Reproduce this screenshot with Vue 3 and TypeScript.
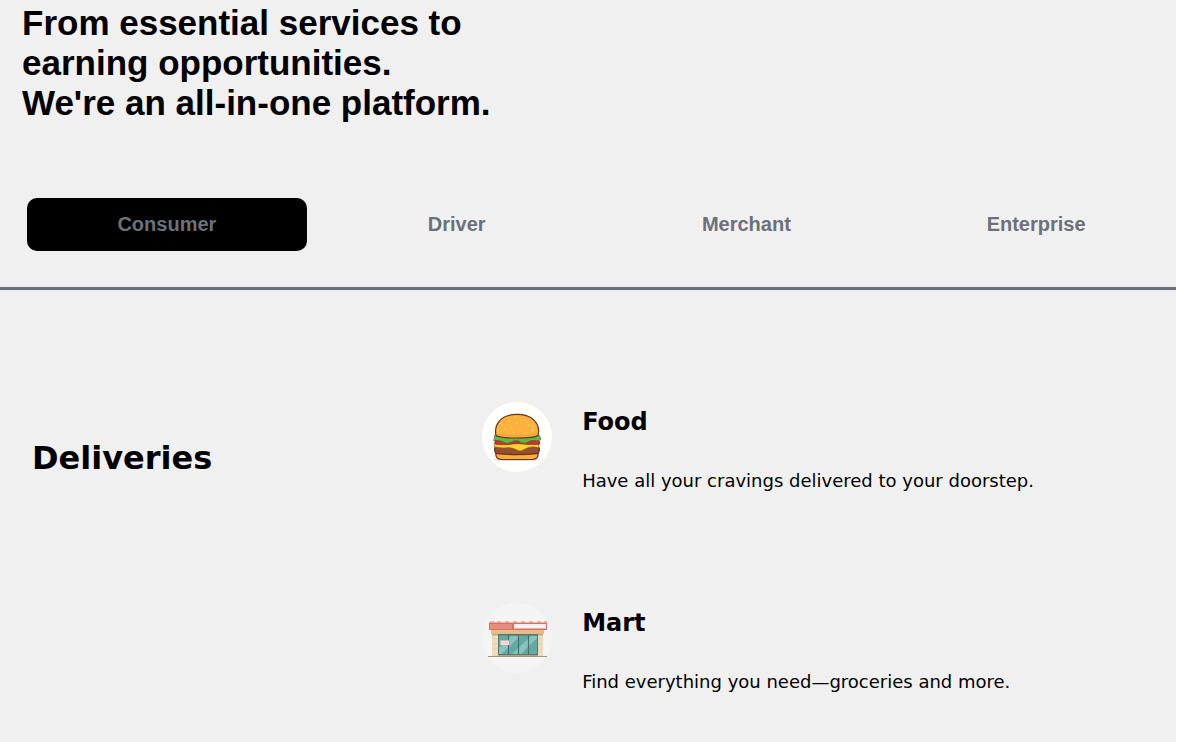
<script setup lang="ts">
import { ref } from 'vue'

interface Service {
  id: 'food' | 'mart'
  name: string
  text: string
}

const tabs: string[] = ['Consumer', 'Driver', 'Merchant', 'Enterprise']
const active = ref<string>('Consumer')

const services: Service[] = [
  { id: 'food', name: 'Food', text: 'Have all your cravings delivered to your doorstep.' },
  { id: 'mart', name: 'Mart', text: 'Find everything you need—groceries and more.' },
]
</script>

<template>
  <main class="page">
    <h1 class="title">
      From essential services to<br />earning opportunities.<br />We're an all-in-one platform.
    </h1>

    <nav class="tabs" aria-label="Audience">
      <button
        v-for="tab in tabs"
        :key="tab"
        type="button"
        class="tab"
        :class="{ active: tab === active }"
        @click="active = tab"
      >
        {{ tab }}
      </button>
    </nav>

    <section class="group">
      <h2 class="group-title">Deliveries</h2>
      <ul class="services">
        <li v-for="service in services" :key="service.id" class="service">
          <svg v-if="service.id === 'food'" class="picture" viewBox="0 0 70 70" aria-hidden="true">
            <circle cx="35" cy="35" r="35" fill="#fffffb" />
            <ellipse cx="35" cy="57.500" rx="23" ry="1.600" fill="#dcdcd8" />
            <path d="M14 51H56C57 55.500 53.500 57.500 50 57.500H20C16.500 57.500 13 55.500 14 51Z" fill="#f9ae38" stroke="#6b3328" stroke-width="1.200" />
            <path d="M15 44H55C58.500 45 58 50.500 55 51.700Q35 53.500 15 51.700C12 50.500 11.500 45 15 44Z" fill="#94502e" stroke="#6b2d26" stroke-width="1.200" />
            <path d="M12.500 41.500H57.500L56.500 45.500L51 44.800Q46 45 42 47.500Q38 50.500 34 47.500Q28 44.500 22 46L12.500 45Z" fill="#ffd52c" stroke="#93571f" stroke-width=".6" />
            <path d="M14 38H56Q59.500 40 57 42.500L46 42.500L35 41.500L25 42.800L14 42.500Q11 41 14 38Z" fill="#cb3030" stroke="#802a26" stroke-width=".6" />
            <path d="M12.500 33.500H57.500L58.800 37.500Q57.500 39.500 52 38.500Q48 38 44 41Q40 42 36.500 39Q32 38 28.500 40.500Q24 42.500 20 39.500Q16 38 11.500 38.500Q13 36.500 12.500 33.500Z" fill="#65b743" stroke="#37703a" stroke-width=".7" />
            <path d="M14 33.500C12.500 27 14.500 19.500 22 15.200C30 11.200 42 11.200 49.500 16C56.500 21 57.500 27.500 56 33.500C51 36.800 19 36.800 14 33.500Z" fill="#fbb13b" stroke="#673329" stroke-width="1.200" />
            <path d="M16 32Q35 35.800 54 32" fill="none" stroke="#f3a035" stroke-width="1.200" />
            <path d="M19 21.500l1 1M23 27l-1 1.200M27 18l1 1M33 15l1 .5M35 21l-1 1M29 25l.5 1M37 28l1 .5M42 18l1 .5M46 24l1-1M51 23l.5 1M50 29l1-1M16 28l.5 1M31 30l1 .5M43 31l1-.5" stroke="#ffe79a" stroke-width="1" stroke-linecap="round" />
          </svg>
          <svg v-else class="picture" viewBox="0 0 70 70" aria-hidden="true">
            <circle cx="35" cy="35" r="35" fill="#f4f4f5" />
            <rect x="10" y="29" width="51" height="24" fill="#eddcba" />
            <path d="M10 36h6M10 41h6M10 46h6M56 36h5M56 41h5M56 46h5" stroke="#dfceaa" stroke-width=".7" />
            <rect x="9" y="27" width="53" height="4" fill="#e3bf87" />
            <rect x="10" y="31" width="51" height="1.500" fill="#b9ac91" />
            <rect x="16" y="31" width="40" height="21.500" fill="#69706c" />
            <rect x="17" y="32.500" width="38" height="18.500" fill="#62aaa4" />
            <path d="M17 45L29 33H38L20 51H17ZM30 51L49 33H55V35L39 51Z" fill="#85c5bc" />
            <path d="M26.500 32V52M36.500 32V52M46.500 32V52" stroke="#4d6d6a" stroke-width="1.200" />
            <rect x="18.500" y="37.500" width="8.500" height="4.500" fill="#fbd5d5" />
            <rect x="7" y="19.500" width="58" height="7.500" fill="#dd6f61" />
            <rect x="8" y="21" width="22" height="5" fill="#e38d80" />
            <rect x="32" y="21" width="32" height="4.500" fill="#f4f1f1" />
            <path d="M8 19h4M15 19h4M23 19h4M31 19h4M39 19h4M47 19h4M55 19h4M62 19h3" stroke="#e8a196" stroke-width="1.500" />
            <path d="M6 53.500H65" stroke="#a49477" stroke-width="1.200" />
          </svg>
          <div class="copy">
            <h3 class="name">{{ service.name }}</h3>
            <p class="text">{{ service.text }}</p>
          </div>
        </li>
      </ul>
    </section>
  </main>
</template>

<style>
body {
  background: #ffffff;
}
</style>

<style scoped>
.page {
  box-sizing: border-box;
  min-height: 100vh;
  margin-right: 4px;
  padding-top: 3px;
  background: #f0f0f0;
  color: #000000;
  font-family: "DejaVu Sans", Verdana, sans-serif;
}

.title {
  margin: 0;
  padding-left: 22px;
  font: bold 35px/40px "Liberation Sans", Arial, sans-serif;
}

.tabs {
  display: grid;
  grid-template-columns: repeat(4, 1fr);
  gap: 10px;
  margin-top: 75px;
  padding: 0 0 36px 27px;
  border-bottom: 3px solid #6b707b;
}

.tab {
  padding: 14px 0 15px;
  border: 0;
  border-radius: 10px;
  background: transparent;
  color: #6b707b;
  font: bold 20px/24px "Liberation Sans", Arial, sans-serif;
  cursor: pointer;
}

.tab.active {
  background: #000000;
}

.group {
  display: grid;
  grid-template-columns: 41% 1fr;
  align-items: start;
  padding-top: 112px;
}

.group-title {
  margin: 36px 0 0;
  padding-left: 32px;
  font-size: 32px;
  line-height: 40px;
}

.services {
  display: grid;
  gap: 110px;
  margin: 0;
  padding: 0;
  list-style: none;
}

.service {
  display: flex;
  align-items: flex-start;
  gap: 30px;
}

.picture {
  flex: none;
  width: 70px;
  height: 70px;
}

.copy {
  padding-top: 4px;
}

.name {
  margin: 0;
  font-size: 24px;
  line-height: 32px;
}

.text {
  margin: 31px 0 0;
  font-size: 18px;
  line-height: 24px;
}
</style>
